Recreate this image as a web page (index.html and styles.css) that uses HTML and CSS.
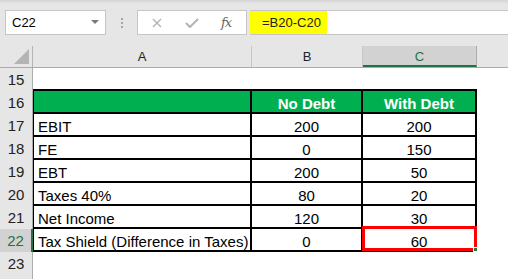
FILE: index.html
```html
<!DOCTYPE html>
<html lang="en">
  <head>
    <meta charset="UTF-8" />
    <meta name="viewport" content="width=device-width, initial-scale=1.0" />
    <title>Tax Shield</title>
    <link rel="stylesheet" href="styles.css">
  </head>
  <body>
    <div class="toolbar">
      <div class="name-box">
        <span>C22</span>
        <span class="drop"></span>
      </div>
      <div class="grip"><i></i><i></i><i></i></div>
      <div class="fx-box">
        <svg class="cancel" width="10" height="10" viewBox="0 0 10 10">
          <path d="M1 1 L9 9 M9 1 L1 9" stroke="#b3b3b3" stroke-width="1.4" fill="none" />
        </svg>
        <svg class="enter" width="14" height="10" viewBox="0 0 14 10">
          <path d="M1 5 L5 9 L13 1" stroke="#b3b3b3" stroke-width="2" fill="none" />
        </svg>
        <span class="fx">fx</span>
      </div>
      <div class="formula">
        <span class="hl">=B20-C20</span>
      </div>
    </div>

    <div class="sheet">
      <div class="row head">
        <div class="rh corner"><span class="tri"></span></div>
        <div class="c col-a">A</div>
        <div class="c col-b">B</div>
        <div class="c col-c sel">C</div>
        <div class="c rest"></div>
      </div>

      <div class="row">
        <div class="rh">15</div>
        <div class="c col-a edge"></div>
        <div class="c col-b edge"></div>
        <div class="c col-c edge"></div>
        <div class="c rest"></div>
      </div>

      <div class="row">
        <div class="rh">16</div>
        <div class="c col-a t green"></div>
        <div class="c col-b t green mid">No Debt</div>
        <div class="c col-c t green mid">With Debt</div>
        <div class="c rest"></div>
      </div>

      <div class="row">
        <div class="rh">17</div>
        <div class="c col-a t">EBIT</div>
        <div class="c col-b t mid">200</div>
        <div class="c col-c t mid">200</div>
        <div class="c rest"></div>
      </div>

      <div class="row">
        <div class="rh">18</div>
        <div class="c col-a t">FE</div>
        <div class="c col-b t mid">0</div>
        <div class="c col-c t mid">150</div>
        <div class="c rest"></div>
      </div>

      <div class="row">
        <div class="rh">19</div>
        <div class="c col-a t">EBT</div>
        <div class="c col-b t mid">200</div>
        <div class="c col-c t mid">50</div>
        <div class="c rest"></div>
      </div>

      <div class="row">
        <div class="rh">20</div>
        <div class="c col-a t">Taxes 40%</div>
        <div class="c col-b t mid">80</div>
        <div class="c col-c t mid">20</div>
        <div class="c rest"></div>
      </div>

      <div class="row">
        <div class="rh">21</div>
        <div class="c col-a t">Net Income</div>
        <div class="c col-b t mid">120</div>
        <div class="c col-c t mid">30</div>
        <div class="c rest"></div>
      </div>

      <div class="row">
        <div class="rh sel">22</div>
        <div class="c col-a t">Tax Shield (Difference in Taxes)</div>
        <div class="c col-b t mid">0</div>
        <div class="c col-c t mid active">60<span class="handle"></span></div>
        <div class="c rest"></div>
      </div>

      <div class="row">
        <div class="rh">23</div>
        <div class="c col-a"></div>
        <div class="c col-b"></div>
        <div class="c col-c"></div>
        <div class="c rest"></div>
      </div>

      <div class="row">
        <div class="rh"></div>
        <div class="c col-a"></div>
        <div class="c col-b"></div>
        <div class="c col-c"></div>
        <div class="c rest"></div>
      </div>
    </div>
  </body>
</html>
```

FILE: styles.css
```css
* {
  margin: 0;
  padding: 0;
  box-sizing: border-box;
}

body {
  width: 508px;
  height: 279px;
  overflow: hidden;
  background: #fff;
  color: #000;
  font-family: "Liberation Sans", Arial, sans-serif;
}

/* formula bar */

.toolbar {
  height: 46px;
  display: flex;
  align-items: flex-start;
  padding-top: 10px;
  background: linear-gradient(#d4d4d4 0, #e6e6e6 4px);
}

.name-box {
  margin-left: 5px;
  width: 101px;
  height: 25px;
  background: #fff;
  border: 1px solid #c6c6c6;
  display: flex;
  align-items: center;
  justify-content: space-between;
  padding: 0 6px 0 6px;
  font-size: 13px;
}

.drop {
  width: 0;
  height: 0;
  border-left: 4px solid transparent;
  border-right: 4px solid transparent;
  border-top: 4px solid #7a7a7a;
  margin-top: -2px;
}

.grip {
  width: 31px;
  height: 25px;
  display: flex;
  flex-direction: column;
  align-items: center;
  justify-content: center;
  gap: 2px;
}

.grip i {
  width: 2px;
  height: 2px;
  background: #a6a6a6;
}

.fx-box {
  width: 110px;
  height: 25px;
  background: #fff;
  border: 1px solid #c6c6c6;
  display: flex;
  align-items: center;
  padding-left: 14px;
}

.enter {
  margin-left: 23px;
}

.fx {
  margin-left: 22px;
  font-family: "DejaVu Serif", "Liberation Serif", serif;
  font-style: italic;
  font-size: 13px;
  color: #666;
  letter-spacing: -1px;
}

.formula {
  flex: 1;
  height: 25px;
  margin-left: 3px;
  background: #fff;
  border-top: 1px solid #c6c6c6;
  border-bottom: 1px solid #c6c6c6;
  display: flex;
}

.hl {
  width: 77px;
  background: #ffff00;
  padding-left: 12px;
  font-size: 13px;
  line-height: 23px;
  color: #222;
}

/* grid */

.sheet {
  height: 233px;
  overflow: hidden;
}

.row {
  display: flex;
  height: 23px;
}

.row.head {
  height: 22px;
  background: #e6e6e6;
  border-bottom: 1px solid #ababab;
}

.rh {
  width: 33px;
  flex: none;
  background: #e6e6e6;
  border-right: 1px solid #ababab;
  text-align: center;
  font-size: 15px;
  line-height: 22px;
  padding-top: 1px;
  color: #222;
}

.rh.sel {
  background: #d2d2d2;
  color: #217346;
  border-right: 2px solid #217346;
}

.corner {
  position: relative;
  border-right-color: #b5b5b5;
}

.tri {
  position: absolute;
  right: 3px;
  bottom: 3px;
  width: 0;
  height: 0;
  border-left: 15px solid transparent;
  border-bottom: 15px solid #b4b4b4;
}

.c {
  flex: none;
  font-size: 15px;
  line-height: 20px;
  padding: 3px 0 0 4px;
  white-space: nowrap;
}

.col-a {
  width: 219px;
}

.col-b {
  width: 111px;
}

.col-c {
  width: 114px;
}

.rest {
  flex: 1;
}

.head .c {
  text-align: center;
  font-size: 13px;
  line-height: 22px;
  padding: 0;
  color: #222;
  border-right: 1px solid #c6c6c6;
}

.head .col-c.sel {
  background: #d2d2d2;
  color: #217346;
  border-bottom: 2px solid #217346;
  border-right-color: #ababab;
}

.head .rest {
  border-right: none;
}

/* data table */

.edge {
  border-bottom: 2px solid #000;
}

.t {
  border-bottom: 2px solid #000;
  border-right: 2px solid #000;
}

.t.col-a {
  border-left: 1px solid #000;
}

.mid {
  text-align: center;
  padding-left: 0;
}

.green {
  background: #00b050;
  color: #fff;
  font-weight: bold;
}

.active {
  position: relative;
}

.active::after {
  content: "";
  position: absolute;
  left: -1px;
  top: -3px;
  right: -2px;
  bottom: -1px;
  border: 3px solid #ff0000;
}

.handle {
  position: absolute;
  right: -3px;
  bottom: -2px;
  width: 5px;
  height: 5px;
  background: #217346;
  border: 1px solid #fff;
  z-index: 1;
}
```
